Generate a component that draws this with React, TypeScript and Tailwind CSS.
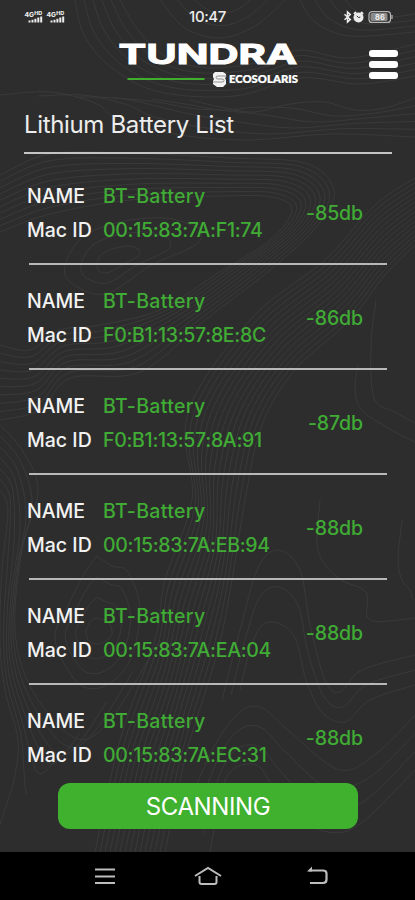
import { useState } from 'react';

type Point = [number, number];

type Device = {
  name: string;
  mac: string;
  signal: string;
};

const devices: Device[] = [
  { name: 'BT-Battery', mac: '00:15:83:7A:F1:74', signal: '-85db' },
  { name: 'BT-Battery', mac: 'F0:B1:13:57:8E:8C', signal: '-86db' },
  { name: 'BT-Battery', mac: 'F0:B1:13:57:8A:91', signal: '-87db' },
  { name: 'BT-Battery', mac: '00:15:83:7A:EB:94', signal: '-88db' },
  { name: 'BT-Battery', mac: '00:15:83:7A:EA:04', signal: '-88db' },
  { name: 'BT-Battery', mac: '00:15:83:7A:EC:31', signal: '-88db' },
];

// Each band is a set of contour lines blended from one edge curve to the other
const bands: { from: Point[]; to: Point[]; count: number }[] = [
  {
    from: [[75, 0], [84, 35], [112, 68], [160, 92], [235, 96], [300, 78], [360, 84], [415, 76]],
    to: [[120, 0], [138, 30], [168, 58], [210, 68], [262, 62], [300, 50], [350, 58], [415, 44]],
    count: 6,
  },
  {
    from: [[160, 0], [185, 28], [220, 38], [255, 26], [285, 0]],
    to: [[195, 0], [208, 10], [225, 13], [240, 8], [250, 0]],
    count: 3,
  },
  {
    from: [[300, 0], [315, 22], [350, 36], [415, 32]],
    to: [[345, 0], [358, 12], [380, 18], [415, 14]],
    count: 4,
  },
  {
    from: [[0, 95], [50, 92], [95, 103], [120, 120], [180, 135], [250, 140], [330, 134], [415, 137]],
    to: [[190, 100], [225, 108], [255, 112], [290, 104], [325, 102], [355, 110], [385, 108], [415, 98]],
    count: 6,
  },
  {
    from: [[0, 175], [50, 154], [130, 153], [230, 158], [305, 163], [334, 190], [318, 225], [270, 270], [205, 320], [140, 372], [70, 378], [40, 410], [0, 420]],
    to: [[0, 232], [50, 214], [130, 200], [220, 196], [272, 197], [292, 210], [270, 240], [215, 275], [160, 310], [100, 325], [60, 330], [30, 350], [0, 345]],
    count: 10,
  },
  {
    from: [[200, 228], [197, 244], [150, 266], [105, 294], [70, 282], [66, 262], [84, 236], [120, 222], [165, 218], [200, 228]],
    to: [[140, 250], [138, 256], [124, 264], [110, 272], [100, 272], [97, 264], [102, 254], [116, 248], [130, 246], [140, 250]],
    count: 3,
  },
  {
    from: [[415, 178], [375, 205], [325, 260], [260, 310], [205, 378], [185, 430], [192, 500], [165, 580], [155, 640], [120, 740], [95, 852]],
    to: [[415, 245], [385, 275], [350, 320], [295, 370], [262, 425], [245, 500], [232, 580], [218, 650], [190, 740], [178, 790], [165, 852]],
    count: 15,
  },
  {
    from: [[0, 425], [22, 450], [38, 490], [22, 550], [15, 630], [32, 690], [75, 738], [110, 720], [160, 640]],
    to: [[0, 490], [8, 510], [2, 570], [0, 640], [5, 690], [18, 740], [14, 780], [8, 800], [0, 825]],
    count: 7,
  },
  {
    from: [[97, 556], [112, 566], [128, 572], [140, 610], [130, 660], [105, 686], [78, 683], [55, 640], [68, 606], [84, 574], [97, 556]],
    to: [[97, 618], [104, 620], [110, 624], [112, 634], [107, 640], [98, 644], [89, 641], [86, 632], [88, 626], [92, 620], [97, 618]],
    count: 4,
  },
  {
    from: [[222, 700], [240, 630], [258, 568], [278, 550], [300, 570], [310, 625], [325, 680], [340, 692], [362, 670], [415, 655]],
    to: [[240, 690], [250, 650], [262, 625], [280, 624], [296, 640], [306, 680], [322, 712], [345, 722], [370, 700], [415, 685]],
    count: 3,
  },
  {
    from: [[190, 800], [215, 745], [240, 712], [262, 708], [290, 732], [340, 770], [378, 752], [415, 715]],
    to: [[210, 852], [222, 790], [235, 768], [258, 766], [275, 790], [300, 820], [350, 830], [415, 770]],
    count: 4,
  },
  {
    from: [[376, 300], [371, 345], [374, 398], [395, 412], [415, 423]],
    to: [[358, 365], [355, 390], [362, 410], [388, 428], [415, 442]],
    count: 2,
  },
  {
    from: [[320, 500], [318, 550], [338, 578], [366, 592], [370, 620], [415, 618]],
    to: [[402, 520], [398, 560], [402, 580], [410, 590], [412, 598], [415, 600]],
    count: 2,
  },
];

const smoothPath = (points: Point[]) => {
  let d = `M${points[0][0]} ${points[0][1]}`;
  for (let i = 0; i < points.length - 1; i++) {
    const p0 = points[i - 1] ?? points[i];
    const p1 = points[i];
    const p2 = points[i + 1];
    const p3 = points[i + 2] ?? p2;
    const c1 = [p1[0] + (p2[0] - p0[0]) / 6, p1[1] + (p2[1] - p0[1]) / 6];
    const c2 = [p2[0] - (p3[0] - p1[0]) / 6, p2[1] - (p3[1] - p1[1]) / 6];
    d += `C${c1[0]} ${c1[1]} ${c2[0]} ${c2[1]} ${p2[0]} ${p2[1]}`;
  }
  return d;
};

const contours = bands.flatMap(({ from, to, count }) =>
  Array.from({ length: count }, (_, i) => {
    const t = i / (count - 1);
    const points = from.map(([x, y], j): Point => [
      x + (to[j][0] - x) * t,
      y + (to[j][1] - y) * t,
    ]);
    return smoothPath(points);
  })
);

const ContourBackground = () => (
  <svg className="absolute inset-0" width="415" height="852" viewBox="0 0 415 852" fill="none" stroke="#3b3b3b" strokeWidth="0.9">
    {contours.map((d, i) => (
      <path key={i} d={d} />
    ))}
  </svg>
);

const SignalIcon = () => (
  <svg width="20" height="14" viewBox="0 0 20 14" fill="#ececec" fontFamily="Inter, sans-serif" fontWeight="800">
    <text x="0.5" y="6.5" fontSize="6.5" textLength="9.5" lengthAdjust="spacingAndGlyphs">4G</text>
    <text x="10.2" y="4.8" fontSize="4.5" textLength="8" lengthAdjust="spacingAndGlyphs">HD</text>
    <rect x="4.5" y="10.5" width="2" height="2" />
    <rect x="7.5" y="9.8" width="2" height="2.7" />
    <rect x="10.4" y="8.8" width="2" height="3.7" />
    <rect x="13.3" y="7.5" width="2" height="5" />
    <rect x="16.2" y="6.5" width="2" height="6" />
  </svg>
);

const StatusBar = () => (
  <div className="flex h-[34px] items-center justify-between pl-6 pr-[22px]">
    <div className="flex w-[80px] gap-[2px]">
      <SignalIcon />
      <SignalIcon />
    </div>
    <span className="mr-[2px] text-[15px] font-medium tracking-[-0.4px] text-[#ececec]">10:47</span>
    <div className="flex w-[80px] items-center justify-end">
      <svg width="50" height="14" viewBox="0 0 50 14" fill="none">
        <path d="M1.5 4.2 7.3 9.4 4.5 12V2l2.8 2.6-5.8 5.2" stroke="#ececec" strokeWidth="1.5" />
        <circle cx="15.5" cy="7.5" r="5" fill="#ececec" />
        <path d="M11 4.2 13 2M20 4.2 18 2" stroke="#ececec" strokeWidth="2" />
        <path d="m13.8 5.8 1.7 1.8 1.8-.6" stroke="#2d2d2d" strokeWidth="1" />
        <rect x="26" y="1.6" width="21.5" height="10.8" rx="3" fill="#2d2d2d" stroke="#b5b5b5" strokeWidth="1.2" />
        <rect x="27.5" y="3" width="17" height="8" rx="1.5" fill="#8b8b8b" />
        <path d="M49 5v4" stroke="#b5b5b5" strokeWidth="1.2" />
        <text x="32" y="9.7" fontSize="7.5" fontWeight="700" fontFamily="Inter, sans-serif" fill="#f0f0f0">86</text>
      </svg>
    </div>
  </div>
);

const Logo = () => (
  <svg width="184" height="60" viewBox="0 -10 184 60" role="img" aria-label="Tundra Ecosolaris">
    <text x="1.5" y="24.5" fontSize="27.5" fontWeight="700" fontFamily="Inter, sans-serif" fill="#fff" stroke="#fff" strokeWidth="1" textLength="178.5" lengthAdjust="spacingAndGlyphs">
      TUNDRA
    </text>
    <path d="M10.5 40h77" stroke="#3fae2c" strokeWidth="2.2" />
    <path d="M98 33h8l3 2v3l-1 1 1 2v4l-3 3h-6l-4-3v-3l1-2-1-2v-3Z" fill="#f2f2f2" />
    <path d="M110 37h-9q-2 0-2 1.500t2 1.500h4q2 0 2 1.500t-2 1.500h-9" fill="none" stroke="#777" strokeWidth="0.8" />
    <text x="112" y="44" fontSize="11" fontWeight="800" fontFamily="Lato, sans-serif" fill="#fff" stroke="#fff" strokeWidth="0.2" textLength="69" lengthAdjust="spacingAndGlyphs">
      ECOSOLARIS
    </text>
  </svg>
);

const Header = ({ onMenu }: { onMenu: () => void }) => (
  <header className="flex h-[66px] items-start justify-between pl-[117px] pr-[17px] pt-[5px]">
    <div className="-mt-[10px]">
      <Logo />
    </div>
    <button className="mt-[11px] flex w-[29px] cursor-pointer flex-col gap-1" onClick={onMenu} aria-label="Menu">
      <span className="h-[7px] w-full rounded-[3px] bg-white" />
      <span className="h-[7px] w-full rounded-[3px] bg-white" />
      <span className="h-[7px] w-full rounded-[3px] bg-white" />
    </button>
  </header>
);

const DeviceRow = ({ device }: { device: Device }) => (
  <li className="ml-[29px] mr-7 flex h-[105px] items-start justify-between border-b-2 border-[#b8b8b8] pt-[19px] text-[19.5px] leading-[34px] last:border-transparent">
    <div className="-ml-[2px]">
      <div className="flex">
        <span className="w-[76px] font-medium text-[#f2f2f2]">NAME</span>
        <span className="font-[450] tracking-[0.35px] text-[#40ab35]">{device.name}</span>
      </div>
      <div className="flex">
        <span className="w-[76px] font-medium text-[#f2f2f2]">Mac ID</span>
        <span className="font-[450] tracking-[-0.3px] text-[#40ab35]">{device.mac}</span>
      </div>
    </div>
    <span className="mr-6 mt-[17px] font-[450] tracking-[-0.1px] text-[#40ab35]">{device.signal}</span>
  </li>
);

const NavBar = () => (
  <nav className="flex h-12 items-center justify-between bg-black pl-[91px] pr-[84px]">
    <svg width="27" height="24" viewBox="0 0 27 24" stroke="#bdbdbd" strokeWidth="2.2">
      <path d="M4 5.5h20M4 12.500h20M4 19h20" />
    </svg>
    <svg className="mr-[6px]" width="30" height="24" viewBox="0 0 30 24" fill="none" stroke="#bdbdbd" strokeWidth="2">
      <path d="M2 12 15 4l13 8" />
      <path d="M6.5 12v6q0 2 2 2h13q2 0 2-2v-6" />
    </svg>
    <svg width="27" height="24" viewBox="0 0 27 24" fill="none" stroke="#bdbdbd" strokeWidth="2.2">
      <path d="M5 6.5h14q3.500 0 3.500 3v6q0 3.500-3.500 3.500H6" />
      <path d="m3 7.500 5-5v5Z" fill="#bdbdbd" stroke="none" />
    </svg>
  </nav>
);

export default function App() {
  const [scanning, setScanning] = useState(true);
  const [menuOpen, setMenuOpen] = useState(false);

  return (
    <div className="h-[900px] w-[415px] overflow-hidden bg-black font-['Inter',sans-serif]">
      <div className="relative h-[852px] overflow-hidden bg-[#2d2d2d]">
        <ContourBackground />

        <div className="relative">
          <StatusBar />
          <Header onMenu={() => setMenuOpen(!menuOpen)} />

          <h1 className="ml-6 mr-[23px] h-[54px] border-b-2 border-[#c4c4c4] text-2xl leading-[50px] tracking-[-0.35px] text-[#ededed]">
            Lithium Battery List
          </h1>

          <ul className="mt-[6px]">
            {devices.map((device) => (
              <DeviceRow key={device.mac} device={device} />
            ))}
          </ul>

          {/* Scan button */}
          <button
            className="-mt-[7px] ml-[58px] block h-[46px] w-[300px] cursor-pointer rounded-xl bg-[#40b02f] pt-[2px] text-2xl tracking-[-0.4px] text-white"
            onClick={() => setScanning(!scanning)}
          >
            {scanning ? 'SCANNING' : 'SCAN'}
          </button>
        </div>
      </div>

      <NavBar />
    </div>
  );
}
